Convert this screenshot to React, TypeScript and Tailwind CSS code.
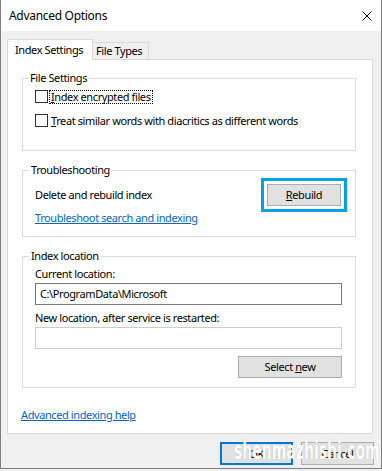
export default function App() {
  return (
    <div className="w-[382px] h-[471px] bg-[#f0f0f0] font-['Noto_Sans',sans-serif] text-[11px] tracking-[-0.4px] text-black whitespace-nowrap">
      <div className="relative w-[382px] h-[469px] flex flex-col border-x border-b border-[#7f7f7f] bg-[#f0f0f0] overflow-hidden">
        {/* Title bar */}
        <div className="h-[31px] bg-white flex items-center justify-between pl-[8px] pr-[9px] shrink-0">
          <span className="leading-[16px] text-[12px] tracking-[-0.3px]">Advanced Options</span>
          <svg width="10" height="10" viewBox="0 0 10 10" className="block">
            <path d="M0.5 0.5 L9.5 9.5 M9.5 0.5 L0.5 9.5" stroke="#000" strokeWidth="1" fill="none" />
          </svg>
        </div>

        {/* Body */}
        <div className="flex flex-col pl-[6px] pr-[8px] pt-[7px]">
          {/* Tabs */}
          <div className="flex items-end h-[21px]">
            <div className="relative z-10 h-[21px] w-[86px] bg-white border border-b-0 border-[#d9d9d9] pl-[7px] flex items-center -mb-[1px] leading-[16px]">
              Index Settings
            </div>
            <div className="h-[17px] w-[57px] -ml-[1px] bg-[#f0f0f0] border border-b-0 border-[#d9d9d9] pl-[3px] flex items-center leading-[16px]">
              File Types
            </div>
          </div>

          {/* Panel */}
          <div className="h-[375px] bg-white border border-[#d9d9d9] pl-[14px] flex flex-col">
            {/* File Settings */}
            <fieldset className="mt-[11px] w-[334px] border border-[#dcdcdc] pl-[12px] pr-[13px] pt-[5px] pb-[23px] flex flex-col gap-[11px]">
              <legend className="-ml-[7px] px-[2px] leading-[14px]">File Settings</legend>
              <div className="flex items-center h-[13px]">
                <span className="w-[13px] h-[13px] border border-[#333333] bg-white shrink-0" />
                <span className="ml-[2px] px-[1px] leading-[12px] outline outline-1 outline-dotted outline-black">
                  <span className="underline">I</span>ndex encrypted files
                </span>
              </div>
              <div className="flex items-center h-[13px]">
                <span className="w-[13px] h-[13px] border border-[#333333] bg-white shrink-0" />
                <span className="ml-[3px] leading-[16px]">
                  <span className="underline">T</span>reat similar words with diacritics as different words
                </span>
              </div>
            </fieldset>

            {/* Troubleshooting */}
            <fieldset className="mt-[12px] w-[334px] border border-[#dcdcdc] pl-[12px] pr-[13px] pt-0 pb-[10px] flex flex-col">
              <legend className="-ml-[6px] px-[2px] leading-[14px]">Troubleshooting</legend>
              <div className="flex items-center justify-between h-[35px]">
                <span className="leading-[16px]">Delete and rebuild index</span>
                <div className="-mr-[5px] border-[3px] border-[#00a2e8] p-[3px]">
                  <div className="w-[74px] h-[22px] bg-[#e1e1e1] border border-[#adadad] flex items-center justify-center leading-[16px]">
                    <span>
                      <span className="underline">R</span>ebuild
                    </span>
                  </div>
                </div>
              </div>
              <span className="-mt-[2px] leading-[16px] text-[#0066cc] underline self-start">Troubleshoot search and indexing</span>
            </fieldset>

            {/* Index location */}
            <fieldset className="mt-[12px] w-[334px] border border-[#dcdcdc] pl-[12px] pr-[13px] pt-[3px] pb-[9px] flex flex-col">
              <legend className="-ml-[6px] px-[2px] leading-[14px]">Index location</legend>
              <span className="leading-[16px]">Current location:</span>
              <div className="mt-[1px] h-[22px] border border-[#7a7a7a] bg-white pl-[4px] flex items-center leading-[16px]">
                C:\ProgramData\Microsoft
              </div>
              <span className="mt-[5px] leading-[16px]">New location, after service is restarted:</span>
              <div className="mt-[1px] h-[22px] border border-[#cccccc] bg-white" />
              <div className="mt-[7px] flex justify-end">
                <div className="w-[104px] h-[22px] bg-[#e1e1e1] border border-[#adadad] flex items-center justify-center leading-[16px]">
                  <span>
                    Select <span className="underline">n</span>ew
                  </span>
                </div>
              </div>
            </fieldset>

            <span className="mt-[19px] -ml-[1px] leading-[16px] text-[#0066cc] underline self-start">Advanced indexing help</span>
          </div>

          {/* Bottom buttons */}
          <div className="mt-[8px] flex justify-end gap-[8px]">
            <div className="w-[73px] h-[23px] bg-[#e1e1e1] border-2 border-[#0078d7] flex items-center justify-center leading-[16px]">
              OK
            </div>
            <div className="w-[73px] h-[23px] bg-[#e1e1e1] border border-[#adadad] flex items-center justify-center leading-[16px] -mr-[1px]">
              Cancel
            </div>
          </div>
        </div>

        {/* Watermark */}
        <div className="absolute left-[233px] top-[437px] text-white font-bold text-[25px] leading-[28px] tracking-normal font-['DejaVu_Sans',sans-serif] origin-left scale-x-[0.56] whitespace-nowrap [text-shadow:0_0_1px_rgba(0,0,0,0.3)]">
          shenmazhishi.com
        </div>
      </div>
    </div>
  );
}
